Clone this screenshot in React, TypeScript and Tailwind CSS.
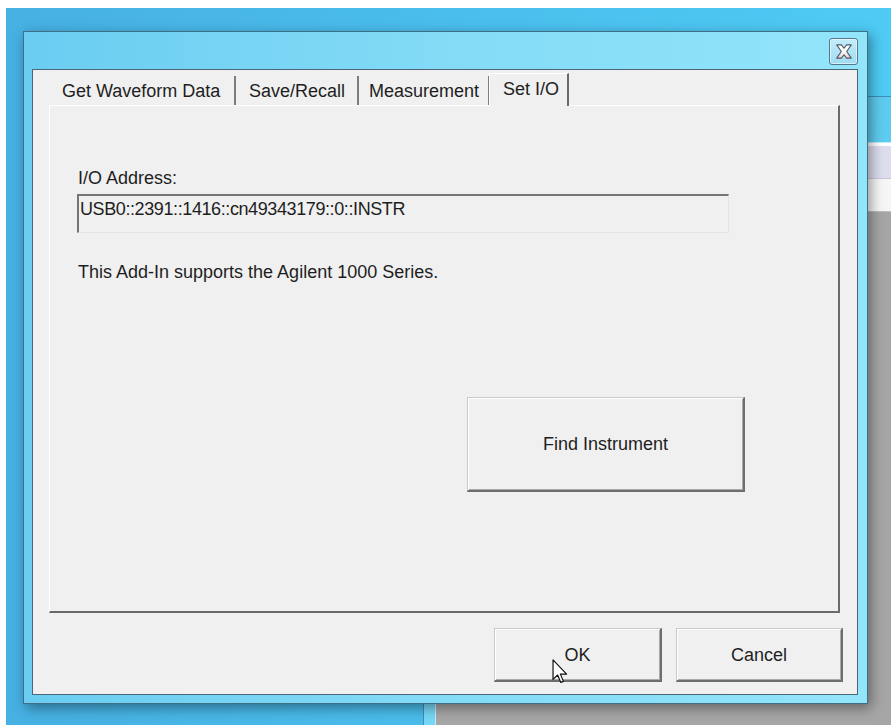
import React from "react";

// Classic Win32 property-sheet dialog sitting on a Windows 8 desktop

const tabs = [
  { label: "Get Waveform Data", width: "w-[185px]", pad: "pl-[11px]" },
  { label: "Save/Recall", width: "w-[123px]", pad: "pl-[13px]" },
  { label: "Measurement", width: "w-[131px]", pad: "pl-[10px]" },
];

function CloseGlyph() {
  return (
    <svg width="18" height="15" viewBox="0 0 16 14">
      <defs>
        <linearGradient id="xfill" x1="0" y1="0" x2="0" y2="1">
          <stop offset="0" stopColor="#ffffff" />
          <stop offset="0.6" stopColor="#f4f4f4" />
          <stop offset="1" stopColor="#f3c9c9" />
        </linearGradient>
      </defs>
      <polygon
        points="1.2,0.8 5.6,0.8 8,4 10.4,0.8 14.8,0.8 10.5,7 14.8,13.2 10.4,13.2 8,10 5.6,13.2 1.2,13.2 5.5,7"
        fill="url(#xfill)"
        stroke="#4c5a66"
        strokeWidth="1"
        strokeLinejoin="round"
      />
    </svg>
  );
}

function Cursor() {
  return (
    <svg width="16" height="25" viewBox="0 0 12 19" className="absolute left-[57px] top-[30px]">
      <path
        d="M0.7 0.7 L0.7 15.5 L4.2 12.2 L6.6 17.8 L8.6 17 L6.3 11.5 L11 11.5 Z"
        fill="#ffffff"
        stroke="#111111"
        strokeWidth="0.9"
        strokeLinejoin="round"
      />
    </svg>
  );
}

function WinButton({
  className = "",
  children,
}: {
  className?: string;
  children?: React.ReactNode;
}) {
  return (
    <div
      className={`relative flex items-center justify-center border-l border-t border-l-[#c9c9c9] border-t-[#c9c9c9] border-b-2 border-r-2 border-b-[#6e6e6e] border-r-[#6e6e6e] bg-[#f0f0f0] shadow-[inset_1px_1px_0_#ffffff,inset_-1px_-1px_0_#a9a9a9] ${className}`}
    >
      {children}
    </div>
  );
}

function BackWindow() {
  return (
    <div className="absolute left-[417px] top-[88px] flex h-[700px] w-[520px] flex-col border-l border-t border-[#3f8fb5] bg-gradient-to-b from-[#5ccbef] to-[#79d9f5] pl-[11px] pt-[45px]">
      <div className="flex flex-1 flex-col border-l border-t border-[#bfeefb] bg-[#a6a6a6]">
        <div className="h-[3px] bg-white" />
        <div className="h-[33px] border-b border-[#c9c9d6] bg-[#dcdded]" />
        <div className="h-[33px] border-b border-[#bdbdbd] bg-[#f6f6f6]" />
        <div className="flex-1" />
      </div>
    </div>
  );
}

function Dialog() {
  return (
    <div className="absolute left-[17px] top-[23px] flex h-[673px] w-[845px] flex-col border border-[#3f6f87] bg-gradient-to-r from-[#6acdf1] via-[#83dbf6] to-[#93e5fa] pb-[8px] pl-[8px] pr-[9px] shadow-[3px_4px_12px_rgba(0,0,0,0.4)]">
      {/* caption strip */}
      <div className="flex h-[37px] shrink-0 items-start justify-end pt-[6px]">
        <div className="flex h-[27px] w-[29px] items-center justify-center rounded-[3px] border border-[#55788c] bg-gradient-to-b from-[#c4ecf9] to-[#9edcf2] shadow-[inset_0_0_0_1px_rgba(255,255,255,0.55)]">
          <CloseGlyph />
        </div>
      </div>

      {/* client area */}
      <div className="flex flex-1 flex-col border border-[#4c6578] bg-[#f0f0f0] pl-[16px] pr-[17px] pt-[3px]">
        {/* tab strip */}
        <div className="flex h-[32px] items-end pl-[2px]">
          {tabs.map((t) => (
            <div
              key={t.label}
              className={`flex h-[29px] items-center border-r-2 border-r-[#7d7d7d] ${t.width} ${t.pad}`}
            >
              <span className="leading-[20px]">{t.label}</span>
            </div>
          ))}
          <div className="relative z-10 -mb-px -ml-px flex h-[33px] w-[80px] items-center border-l border-t border-l-white border-t-white border-r-2 border-r-[#6a6a6a] bg-[#f0f0f0] pb-[2px] pl-[13px]">
            <span className="leading-[20px]">Set I/O</span>
          </div>
        </div>

        {/* tab page */}
        <div className="flex h-[508px] shrink-0 flex-col border-l border-t border-l-white border-t-white border-b-2 border-r-2 border-b-[#6a6a6a] border-r-[#6a6a6a] px-[27px]">
          <div className="ml-px mt-[62px] leading-[20px]">I/O Address:</div>
          <div className="mt-[6px] h-[39px] w-[652px] border-l-2 border-t-2 border-l-[#767676] border-t-[#767676] border-b border-r border-b-[#e4e4e4] border-r-[#e4e4e4] pl-px pt-[3px] leading-[20px] tracking-[-0.4px]">
            USB0::2391::1416::cn49343179::0::INSTR
          </div>
          <div className="ml-px mt-[29px] leading-[20px]">
            This Add-In supports the Agilent 1000 Series.
          </div>
          <WinButton className="ml-[390px] mt-[115px] h-[95px] w-[278px]">
            <span className="leading-[20px]">Find Instrument</span>
          </WinButton>
        </div>

        {/* dialog buttons */}
        <div className="-mr-[3px] mt-[15px] flex justify-end gap-[14px]">
          <WinButton className="h-[54px] w-[168px]">
            <span className="leading-[20px]">OK</span>
            <Cursor />
          </WinButton>
          <WinButton className="h-[54px] w-[167px]">
            <span className="leading-[20px]">Cancel</span>
          </WinButton>
        </div>
      </div>
    </div>
  );
}

export default function App() {
  return (
    <div className="flex h-[725px] w-[891px] flex-col overflow-hidden bg-white font-['Liberation_Sans',Arial,sans-serif] text-[18px] text-[#1e1e1e]">
      <div className="h-[8px] shrink-0" />
      <div className="flex flex-1">
        <div className="w-[6px] shrink-0" />
        <div className="relative flex-1 overflow-hidden bg-gradient-to-r from-[#46b0e2] to-[#4ecbf5]">
          <BackWindow />
          <Dialog />
        </div>
      </div>
    </div>
  );
}
